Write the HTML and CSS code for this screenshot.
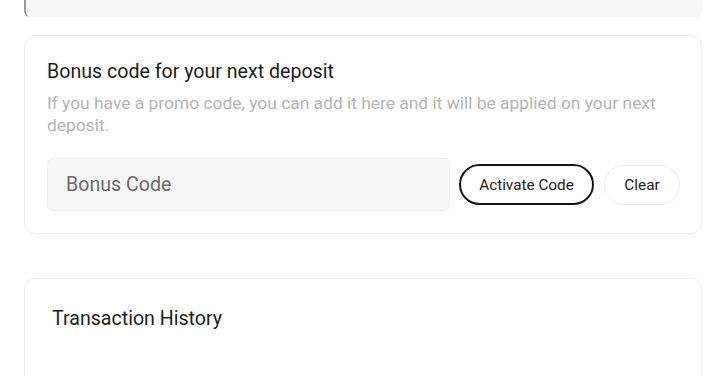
FILE: index.html
```html
<!DOCTYPE html>
<html lang="en">
<head>
<meta charset="utf-8">
<title>Bonus code</title>
<link rel="stylesheet" href="styles.css">
</head>
<body>
<div class="page">
  <div class="top-box"></div>
  <section class="card bonus">
    <h2 class="card-title">Bonus code for your next deposit</h2>
    <p class="card-desc">If you have a promo code, you can add it here and it will be applied on your next deposit.</p>
    <div class="code-row">
      <input class="code-input" type="text" placeholder="Bonus Code">
      <button class="btn btn-primary" type="button">Activate Code</button>
      <button class="btn btn-clear" type="button">Clear</button>
    </div>
  </section>
  <section class="card history">
    <h2 class="card-title history-title">Transaction History</h2>
  </section>
</div>
</body>
</html>
```

FILE: styles.css
```css
* { box-sizing: border-box; }
html, body { margin: 0; padding: 0; background: #ffffff; }
body {
  font-family: Roboto, "Liberation Sans", Arial, sans-serif;
  color: #1c1c1e;
  overflow: hidden;
  height: 376px;
}
.page {
  width: 678px;
  margin-left: 24px;
  display: flex;
  flex-direction: column;
}
.top-box {
  height: 17px;
  background: #f7f7f7;
  border-left: 2px solid #9a9a9a;
  border-radius: 0 0 6px 6px;
}
.card {
  background: #fff;
  border: 1px solid #ececec;
  border-radius: 11px;
}
.bonus {
  margin-top: 18px;
  padding: 23px 21px 22px 22px;
}
.card-title {
  margin: 0;
  font-size: 19.6px;
  line-height: 26px;
  font-weight: 400;
  color: #1c1c1e;
}
.card-desc {
  margin: 7px 0 0;
  font-size: 17.4px;
  line-height: 22px;
  color: #b5b5b5;
}
.code-row {
  display: flex;
  align-items: center;
  gap: 9px;
  margin-top: 22px;
}
.code-input {
  flex: 1;
  min-width: 0;
  height: 53px;
  border: 1px solid #eeeeee;
  background: #f7f7f7;
  border-radius: 6px;
  padding: 0 18px;
  font-family: inherit;
  font-size: 19.6px;
  color: #1c1c1e;
  outline: none;
}
.code-input::placeholder { color: #6a6a6a; }
.btn {
  font-family: inherit;
  font-size: 15.3px;
  line-height: 18px;
  color: #222;
  background: #fff;
  border-radius: 21px;
  padding: 0;
  cursor: pointer;
}
.btn-primary {
  flex: 0 0 135px;
  height: 41px;
  border: 2px solid #151520;
}
.btn-clear {
  flex: 0 0 76px;
  height: 40px;
  border: 1px solid #ececec;
  margin-left: 1px;
}
.history {
  margin-top: 44px;
  height: 98px;
  padding: 27px 27px 0;
  border-bottom: none;
  border-radius: 11px 11px 0 0;
}
```
